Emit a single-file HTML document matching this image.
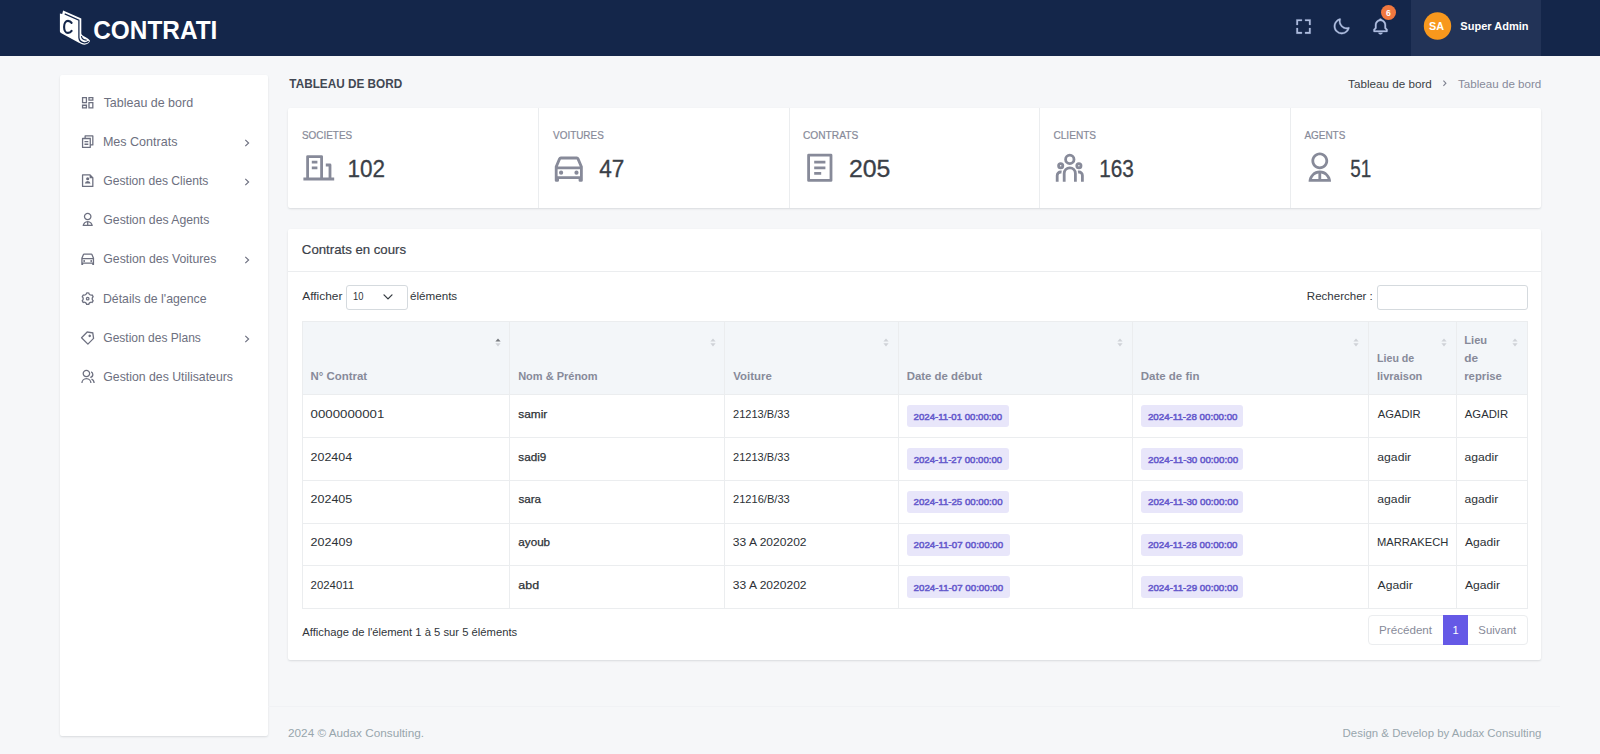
<!DOCTYPE html>
<html lang="fr">
<head>
<meta charset="utf-8">
<title>Contrati - Tableau de bord</title>
<style>
*{box-sizing:border-box;margin:0;padding:0}
html,body{width:1600px;height:754px;overflow:hidden}
body{position:relative;background:#f6f7f9;font-family:"Liberation Sans",sans-serif;font-size:11.7px;color:#212529}
ul,ol{list-style:none}
a{color:inherit;text-decoration:none}
.abs,.tx,svg{position:absolute}
h2,h4,p,li{font:inherit}
text{white-space:pre}
svg{overflow:visible}
#topbar{background:#14264a}
.userbox{background:#223357}
.card{background:#fff;border-radius:2px;box-shadow:0 1px 2px rgba(56,65,74,.15)}
.bell-badge{border-radius:50%;background:#f1783f}
.vline{background:#ebedef;width:1px}
.hline{background:#ebedef;height:1px}
table{position:absolute;border-collapse:separate;border-spacing:0;table-layout:fixed}
th,td{position:relative;border-left:1px solid #ebedef;border-top:1px solid #ebedef;padding:0;font-weight:400;text-align:left}
th:last-child,td:last-child{border-right:1px solid #ebedef}
tbody tr:last-child td{border-bottom:1px solid #ebedef}
thead th{background:#f3f6f9}
.badge{position:absolute;background:#e8e6fa;border-radius:3px}
.field{position:absolute;background:#fff;border:1px solid #d5dade;border-radius:3px}
.pagination{position:absolute;border:1px solid #ebedef;border-radius:4px;background:#fff}
.pagination .on{position:absolute;background:#6559e6}
</style>
</head>
<body>
<header id="topbar" class="abs" style="left:0px;top:0px;width:1600px;height:56px;">
<a class="logo" href="#"><svg style="left:56px;top:8px" width="38" height="40" viewBox="56 8 38 40"><path fill="#fff" d="M59.9 13.6 62.2 13.9 63.1 10.6 81.3 18.4V33.6C81.6 35.4 83.4 36 85.3 36.9 87.7 38 89.6 39.4 90 41.1 89.4 43 87.2 44.6 84.4 44.7 82.4 44.6 80.6 43.6 78.4 42.4L61.4 33.2C60.3 32.6 59.9 31.9 59.9 30.9Z"/><path fill="none" stroke="#14264a" stroke-width="1.25" d="M64.7 13.9 78.9 20.1V37.6C79.1 40.4 81 42.3 84.2 42.8 86.3 42.9 87.9 42.2 88.6 41.2"/><path fill="none" stroke="#14264a" stroke-width="1.1" d="M81.4 36.2C81.8 38.6 83.8 40.2 86.6 40.1"/><path fill="none" stroke="#14264a" stroke-width="2.1" stroke-linecap="round" d="M71.6 22.9A4.3 4.3 0 0 0 68 20.9C65.7 20.9 64.1 23.4 64.1 26.9S65.7 32.9 68 32.9A4.3 4.3 0 0 0 71.6 30.9"/></svg>
<svg id="logo" class="tx" style="left:91px;top:11px" width="128" height="37"><text x="2.20" y="28" font-size="26.3" font-weight="700" fill="#fff" textLength="124.20" lengthAdjust="spacingAndGlyphs">CONTRATI</text></svg></a>
<svg style="left:1294.00px;top:16.65px" width="19.0" height="19.0" viewBox="0 0 24 24"><path fill="#afbee0" stroke="#afbee0" stroke-width="0.35" d="M5 5h5V3H3v7h2zm5 14H5v-5H3v7h7zm11-5h-2v5h-5v2h7zm-2-4h2V3h-7v2h5z"/></svg><svg style="left:1332.30px;top:16.70px" width="19.0" height="19.0" viewBox="0 0 24 24"><path fill="#afbee0" stroke="#afbee0" stroke-width="0.35" d="M20.742 13.045a8.088 8.088 0 0 1-2.077.271c-2.135 0-4.14-.83-5.646-2.336a8.025 8.025 0 0 1-2.064-7.723A1 1 0 0 0 9.73 2.034a10.014 10.014 0 0 0-4.489 2.582c-3.898 3.898-3.898 10.243 0 14.143a9.937 9.937 0 0 0 7.072 2.93 9.93 9.93 0 0 0 7.07-2.929 10.007 10.007 0 0 0 2.583-4.491 1.001 1.001 0 0 0-1.224-1.224zm-2.772 4.301a7.947 7.947 0 0 1-5.656 2.343 7.953 7.953 0 0 1-5.658-2.344c-3.118-3.119-3.118-8.195 0-11.314a7.923 7.923 0 0 1 2.06-1.483 10.027 10.027 0 0 0 2.89 7.848 9.972 9.972 0 0 0 7.848 2.891 8.036 8.036 0 0 1-1.484 2.059z"/></svg><svg style="left:1370.55px;top:16.85px" width="19.0" height="19.0" viewBox="0 0 24 24"><path fill="#afbee0" stroke="#afbee0" stroke-width="0.35" d="M19 13.586V10c0-3.217-2.185-5.927-5.145-6.742C13.562 2.52 12.846 2 12 2s-1.562.52-1.855 1.258C7.185 4.074 5 6.783 5 10v3.586l-1.707 1.707A.996.996 0 0 0 3 16v2a1 1 0 0 0 1 1h16a1 1 0 0 0 1-1v-2a.996.996 0 0 0-.293-.707L19 13.586zM19 17H5v-.586l1.707-1.707A.996.996 0 0 0 7 14v-4c0-2.757 2.243-5 5-5s5 2.243 5 5v4c0 .266.105.52.293.707L19 16.414V17zm-7 5a2.98 2.98 0 0 0 2.818-2H9.182A2.98 2.98 0 0 0 12 22z"/></svg><span class="abs bell-badge" style="left:1381px;top:5px;width:15.4px;height:15.4px;"></span><svg id="bellnum" class="tx" style="left:1383px;top:6px" width="11" height="13"><text x="3.10" y="10" font-size="8.6" font-weight="700" fill="#fff">6</text></svg><div class="abs userbox" style="left:1411px;top:0px;width:130px;height:56px;"><svg class="avatar" style="left:0;top:0" width="130" height="56" viewBox="1411 0 130 56"><circle cx="1437.5" cy="26.0" r="13.7" fill="#f8981d"/></svg><svg id="sa" class="tx" style="left:15px;top:18px" width="22" height="16"><text x="3.00" y="12" font-size="10.8" font-weight="700" fill="#fff">SA</text></svg><svg id="uname" class="tx" style="left:46px;top:18px" width="74" height="16"><text x="3.38" y="12" font-size="10.9" font-weight="700" fill="#fff" textLength="68.10" lengthAdjust="spacingAndGlyphs">Super Admin</text></svg></div>
</header>
<nav id="sidebar" class="abs card" style="left:60px;top:75px;width:208px;height:661px;">
<ul>
<li><a href="#"><svg style="left:19.8px;top:19.70px" width="15.4" height="15.4" viewBox="0 0 24 24"><path fill="#6d7080" d="M13 21V11h8v10h-8zM3 13V3h8v10H3zm6-2V5H5v6h4zM3 21v-6h8v6H3zm2-2h4v-2H5v2zm10 0h4v-6h-4v6zM13 3h8v6h-8V3zm2 2v2h4V5h-4z"/></svg><svg id="m0" class="tx" style="left:40px;top:18px" width="95" height="18"><text x="3.65" y="14" font-size="12.4" fill="#6d7080" textLength="89.44" lengthAdjust="spacingAndGlyphs">Tableau de bord</text></svg></a></li>
<li><a href="#"><svg style="left:19.8px;top:58.86px" width="15.4" height="15.4" viewBox="0 0 24 24"><path fill="#6d7080" d="M7 6V3a1 1 0 0 1 1-1h12a1 1 0 0 1 1 1v14a1 1 0 0 1-1 1h-3v3c0 .552-.45 1-1.007 1H4.007A1.001 1.001 0 0 1 3 21l.003-14c0-.552.45-1 1.007-1H7zM5.003 8L5 20h10V8H5.003zM9 6h8v10h2V4H9v2zm-2 5h6v2H7v-2zm0 4h6v2H7v-2z"/></svg><svg id="m1" class="tx" style="left:40px;top:57px" width="80" height="18"><text x="2.90" y="14" font-size="12.4" fill="#6d7080" textLength="74.55" lengthAdjust="spacingAndGlyphs">Mes Contrats</text></svg><svg style="left:182.8px;top:63.76px" width="8" height="8" viewBox="0 0 8 8" fill="none" stroke="#6d7080" stroke-width="1.15"><path d="M2.3 0.9 5.6 4 2.3 7.1"/></svg></a></li>
<li><a href="#"><svg style="left:19.8px;top:98.02px" width="15.4" height="15.4" viewBox="0 0 24 24"><path fill="#6d7080" d="M15 4H5v16h14V8h-4V4zM3 2.992C3 2.444 3.447 2 3.999 2H16l5 5v13.993A1 1 0 0 1 20.007 22H3.993A1 1 0 0 1 3 21.008V2.992zM12 11.5a2.5 2.5 0 1 1 0-5 2.5 2.5 0 0 1 0 5zm-4.473 5a4.5 4.5 0 0 1 8.946 0H7.527z"/></svg><svg id="m2" class="tx" style="left:40px;top:96px" width="111" height="18"><text x="3.30" y="14" font-size="12.4" fill="#6d7080" textLength="105.09" lengthAdjust="spacingAndGlyphs">Gestion des Clients</text></svg><svg style="left:182.8px;top:102.92px" width="8" height="8" viewBox="0 0 8 8" fill="none" stroke="#6d7080" stroke-width="1.15"><path d="M2.3 0.9 5.6 4 2.3 7.1"/></svg></a></li>
<li><a href="#"><svg style="left:19.8px;top:137.18px" width="15.4" height="15.4" viewBox="0 0 24 24"><path fill="#6d7080" d="M4 22a8 8 0 1 1 16 0H4zm9-5.917V20h4.659A6.009 6.009 0 0 0 13 16.083zM11 20v-3.917A6.009 6.009 0 0 0 6.341 20H11zm1-7c-3.315 0-6-2.685-6-6s2.685-6 6-6 6 2.685 6 6-2.685 6-6 6zm0-2c2.21 0 4-1.79 4-4s-1.79-4-4-4-4 1.79-4 4 1.79 4 4 4z"/></svg><svg id="m3" class="tx" style="left:40px;top:135px" width="112" height="18"><text x="3.33" y="14" font-size="12.4" fill="#6d7080" textLength="106.06" lengthAdjust="spacingAndGlyphs">Gestion des Agents</text></svg></a></li>
<li><a href="#"><svg style="left:19.8px;top:176.34px" width="15.4" height="15.4" viewBox="0 0 24 24"><path fill="#6d7080" d="M19 20H5v1a1 1 0 0 1-1 1H3a1 1 0 0 1-1-1V11l2.48-5.788A2 2 0 0 1 6.32 4H17.68a2 2 0 0 1 1.838 1.212L22 11v10a1 1 0 0 1-1 1h-1a1 1 0 0 1-1-1v-1zm1-7H4v5h16v-5zM4.176 11h15.648l-2.143-5H6.32l-2.143 5zM6.5 17a1.5 1.5 0 1 1 0-3 1.5 1.5 0 0 1 0 3zm11 0a1.5 1.5 0 1 1 0-3 1.5 1.5 0 0 1 0 3z"/></svg><svg id="m4" class="tx" style="left:40px;top:174px" width="119" height="18"><text x="3.30" y="14" font-size="12.4" fill="#6d7080" textLength="113.01" lengthAdjust="spacingAndGlyphs">Gestion des Voitures</text></svg><svg style="left:182.8px;top:181.24px" width="8" height="8" viewBox="0 0 8 8" fill="none" stroke="#6d7080" stroke-width="1.15"><path d="M2.3 0.9 5.6 4 2.3 7.1"/></svg></a></li>
<li><a href="#"><svg style="left:19.8px;top:215.50px" width="15.4" height="15.4" viewBox="0 0 24 24"><path fill="#6d7080" d="M3.34 17a10.018 10.018 0 0 1-.978-2.326 3 3 0 0 0 .002-5.347A9.99 9.99 0 0 1 4.865 4.99a3 3 0 0 0 4.631-2.674 9.99 9.99 0 0 1 5.007.002 3 3 0 0 0 4.632 2.672c.579.59 1.093 1.261 1.525 2.01.433.749.757 1.53.978 2.326a3 3 0 0 0-.002 5.347 9.99 9.99 0 0 1-2.501 4.337 3 3 0 0 0-4.631 2.674 9.99 9.99 0 0 1-5.007-.002 3 3 0 0 0-4.632-2.672A10.018 10.018 0 0 1 3.34 17zm5.66.196a4.993 4.993 0 0 1 2.25 2.77c.499.047 1 .048 1.499.001A4.993 4.993 0 0 1 15 17.197a4.993 4.993 0 0 1 3.525-.565c.29-.408.54-.843.748-1.298A4.993 4.993 0 0 1 18 12c0-1.26.47-2.437 1.273-3.334a8.126 8.126 0 0 0-.75-1.298A4.993 4.993 0 0 1 15 6.804a4.993 4.993 0 0 1-2.25-2.77c-.499-.047-1-.048-1.499-.001A4.993 4.993 0 0 1 9 6.803a4.993 4.993 0 0 1-3.525.565 7.99 7.99 0 0 0-.748 1.298A4.993 4.993 0 0 1 6 12c0 1.26-.47 2.437-1.273 3.334a8.126 8.126 0 0 0 .75 1.298A4.993 4.993 0 0 1 9 17.196zM12 15a3 3 0 1 1 0-6 3 3 0 0 1 0 6zm0-2a1 1 0 1 0 0-2 1 1 0 0 0 0 2z"/></svg><svg id="m5" class="tx" style="left:40px;top:214px" width="109" height="18"><text x="2.94" y="14" font-size="12.4" fill="#6d7080" textLength="103.54" lengthAdjust="spacingAndGlyphs">Détails de l'agence</text></svg></a></li>
<li><a href="#"><svg style="left:19.8px;top:254.66px" width="15.4" height="15.4" viewBox="0 0 24 24"><path fill="#6d7080" d="M10.9 2.1l9.899 1.415 1.414 9.9-9.192 9.192a1 1 0 0 1-1.414 0l-9.9-9.9a1 1 0 0 1 0-1.414L10.9 2.1zm.707 2.122L3.828 12l8.486 8.485 7.778-7.778-1.06-7.425-7.425-1.06zm2.12 6.364a2 2 0 1 1 2.83-2.829 2 2 0 0 1-2.83 2.829z"/></svg><svg id="m6" class="tx" style="left:40px;top:253px" width="103" height="18"><text x="3.29" y="14" font-size="12.4" fill="#6d7080" textLength="97.57" lengthAdjust="spacingAndGlyphs">Gestion des Plans</text></svg><svg style="left:182.8px;top:259.56px" width="8" height="8" viewBox="0 0 8 8" fill="none" stroke="#6d7080" stroke-width="1.15"><path d="M2.3 0.9 5.6 4 2.3 7.1"/></svg></a></li>
<li><a href="#"><svg style="left:19.8px;top:293.82px" width="15.4" height="15.4" viewBox="0 0 24 24"><path fill="#6d7080" d="M2 22a8 8 0 1 1 16 0h-2a6 6 0 1 0-12 0H2zm8-9c-3.315 0-6-2.685-6-6s2.685-6 6-6 6 2.685 6 6-2.685 6-6 6zm0-2c2.21 0 4-1.79 4-4s-1.79-4-4-4-4 1.79-4 4 1.79 4 4 4zm8.284 3.703A8.002 8.002 0 0 1 23 22h-2a6.001 6.001 0 0 0-3.537-5.473l.82-1.824zm-.688-11.29A5.5 5.5 0 0 1 21 8.5a5.499 5.499 0 0 1-5 5.478v-2.013a3.5 3.5 0 0 0 1.041-6.609l.555-1.943z"/></svg><svg id="m7" class="tx" style="left:40px;top:292px" width="135" height="18"><text x="3.26" y="14" font-size="12.4" fill="#6d7080" textLength="129.70" lengthAdjust="spacingAndGlyphs">Gestion des Utilisateurs</text></svg></a></li>
</ul>
</nav>
<main>
<div class="page-title"><h4><svg id="ptitle" class="tx" style="left:286px;top:75px" width="119" height="18"><text x="3.33" y="13" font-size="12.2" font-weight="700" fill="#424853" textLength="112.83" lengthAdjust="spacingAndGlyphs">TABLEAU DE BORD</text></svg></h4><ol class="breadcrumb"><li><svg id="bc1" class="tx" style="left:1345px;top:76px" width="89" height="16"><text x="3.13" y="12" font-size="11.1" fill="#3a3f45" textLength="83.68" lengthAdjust="spacingAndGlyphs">Tableau de bord</text></svg></li><li aria-hidden="true"><svg style="left:1441px;top:79px" width="8" height="8" viewBox="0 0 8 8" fill="none" stroke="#7d8090" stroke-width="1.1"><path d="M2.4 1.6 4.9 4.2 2.4 6.8"/></svg></li><li><svg id="bc2" class="tx" style="left:1455px;top:76px" width="89" height="16"><text x="3.05" y="12" font-size="11.1" fill="#878a99" textLength="83.28" lengthAdjust="spacingAndGlyphs">Tableau de bord</text></svg></li></ol></div>
<section class="abs card stats" style="left:288px;top:108px;width:1253px;height:100px;">
<div class="stat"><p><svg id="sl0" class="tx" style="left:11px;top:20px" width="56" height="15"><text x="2.99" y="11" font-size="10.1" fill="#878a99" stroke="#878a99" stroke-width="0.2" textLength="50.16" lengthAdjust="spacingAndGlyphs">SOCIETES</text></svg></p><svg style="left:13.8px;top:43.4px" width="33.6" height="33.6" viewBox="0 0 24 24"><path fill="#878a99" d="M21 19h2v2H1v-2h2V4a1 1 0 0 1 1-1h10a1 1 0 0 1 1 1v15h4v-8h-2V9h3a1 1 0 0 1 1 1v9zM5 5v14h8V5H5zm2 6h4v2H7v-2zm0-4h4v2H7V7z"/></svg><h2><svg id="sn0" class="tx" style="left:58px;top:44px" width="42" height="33"><text x="1.56" y="25" font-size="23.0" fill="#3a4047" stroke="#3a4047" stroke-width="0.3" textLength="37.52" lengthAdjust="spacingAndGlyphs">102</text></svg></h2></div>
<div class="stat"><span class="abs vline" style="left:250px;top:0;height:100px"></span><p><svg id="sl1" class="tx" style="left:262px;top:20px" width="57" height="15"><text x="3.07" y="11" font-size="10.1" fill="#878a99" stroke="#878a99" stroke-width="0.2" textLength="50.72" lengthAdjust="spacingAndGlyphs">VOITURES</text></svg></p><svg style="left:264.2px;top:43.4px" width="33.6" height="33.6" viewBox="0 0 24 24"><path fill="#878a99" d="M19 20H5v1a1 1 0 0 1-1 1H3a1 1 0 0 1-1-1V11l2.48-5.788A2 2 0 0 1 6.32 4H17.68a2 2 0 0 1 1.838 1.212L22 11v10a1 1 0 0 1-1 1h-1a1 1 0 0 1-1-1v-1zm1-7H4v5h16v-5zM4.176 11h15.648l-2.143-5H6.32l-2.143 5zM6.5 17a1.5 1.5 0 1 1 0-3 1.5 1.5 0 0 1 0 3zm11 0a1.5 1.5 0 1 1 0-3 1.5 1.5 0 0 1 0 3z"/></svg><h2><svg id="sn1" class="tx" style="left:308px;top:44px" width="30" height="33"><text x="3.25" y="25" font-size="23.0" fill="#3a4047" stroke="#3a4047" stroke-width="0.3" textLength="25.11" lengthAdjust="spacingAndGlyphs">47</text></svg></h2></div>
<div class="stat"><span class="abs vline" style="left:501px;top:0;height:100px"></span><p><svg id="sl2" class="tx" style="left:512px;top:20px" width="61" height="15"><text x="2.94" y="11" font-size="10.1" fill="#878a99" stroke="#878a99" stroke-width="0.2" textLength="55.27" lengthAdjust="spacingAndGlyphs">CONTRATS</text></svg></p><svg style="left:514.6px;top:43.4px" width="33.6" height="33.6" viewBox="0 0 24 24"><path fill="#878a99" d="M20 22H4a1 1 0 0 1-1-1V3a1 1 0 0 1 1-1h16a1 1 0 0 1 1 1v18a1 1 0 0 1-1 1zm-1-2V4H5v16h14zM8 7h8v2H8V7zm0 4h8v2H8v-2zm0 4h5v2H8v-2z"/></svg><h2><svg id="sn2" class="tx" style="left:558px;top:44px" width="46" height="33"><text x="2.94" y="25" font-size="23.0" fill="#3a4047" stroke="#3a4047" stroke-width="0.3" textLength="41.43" lengthAdjust="spacingAndGlyphs">205</text></svg></h2></div>
<div class="stat"><span class="abs vline" style="left:751px;top:0;height:100px"></span><p><svg id="sl3" class="tx" style="left:762px;top:20px" width="49" height="15"><text x="3.45" y="11" font-size="10.1" fill="#878a99" stroke="#878a99" stroke-width="0.2" textLength="42.66" lengthAdjust="spacingAndGlyphs">CLIENTS</text></svg></p><svg style="left:765.0px;top:43.4px" width="33.6" height="33.6" viewBox="0 0 24 24"><path fill="#878a99" d="M12 11a5 5 0 0 1 5 5v6h-2v-6a3 3 0 0 0-2.824-2.995L12 13a3 3 0 0 0-2.995 2.824L9 16v6H7v-6a5 5 0 0 1 5-5zm-6.5 3c.279 0 .55.033.81.094a5.947 5.947 0 0 0-.301 1.575L6 16v.086a1.492 1.492 0 0 0-.356-.08L5.5 16a1.5 1.5 0 0 0-1.493 1.356L4 17.5V22H2v-4.5A3.5 3.5 0 0 1 5.5 14zm13 0a3.5 3.5 0 0 1 3.5 3.5V22h-2v-4.5a1.5 1.5 0 0 0-1.356-1.493L18.5 16c-.175 0-.343.03-.5.085V16c0-.666-.108-1.306-.309-1.904.259-.063.53-.096.809-.096zm-13-6a2.5 2.5 0 1 1 0 5 2.5 2.5 0 0 1 0-5zm13 0a2.5 2.5 0 1 1 0 5 2.5 2.5 0 0 1 0-5zm-13 2a.5.5 0 1 0 0 1 .5.5 0 0 0 0-1zm13 0a.5.5 0 1 0 0 1 .5.5 0 0 0 0-1zM12 2a4 4 0 1 1 0 8 4 4 0 0 1 0-8zm0 2a2 2 0 1 0 0 4 2 2 0 0 0 0-4z"/></svg><h2><svg id="sn3" class="tx" style="left:809px;top:44px" width="39" height="33"><text x="2.19" y="25" font-size="23.0" fill="#3a4047" stroke="#3a4047" stroke-width="0.3" textLength="34.67" lengthAdjust="spacingAndGlyphs">163</text></svg></h2></div>
<div class="stat"><span class="abs vline" style="left:1002px;top:0;height:100px"></span><p><svg id="sl4" class="tx" style="left:1013px;top:20px" width="47" height="15"><text x="3.38" y="11" font-size="10.1" fill="#878a99" stroke="#878a99" stroke-width="0.2" textLength="40.93" lengthAdjust="spacingAndGlyphs">AGENTS</text></svg></p><svg style="left:1015.4px;top:43.4px" width="33.6" height="33.6" viewBox="0 0 24 24"><path fill="#878a99" d="M4 22a8 8 0 1 1 16 0H4zm9-5.917V20h4.659A6.009 6.009 0 0 0 13 16.083zM11 20v-3.917A6.009 6.009 0 0 0 6.341 20H11zm1-7c-3.315 0-6-2.685-6-6s2.685-6 6-6 6 2.685 6 6-2.685 6-6 6zm0-2c2.21 0 4-1.79 4-4s-1.79-4-4-4-4 1.79-4 4 1.79 4 4 4z"/></svg><h2><svg id="sn4" class="tx" style="left:1059px;top:44px" width="26" height="33"><text x="3.37" y="25" font-size="23.0" fill="#3a4047" stroke="#3a4047" stroke-width="0.3" textLength="21.00" lengthAdjust="spacingAndGlyphs">51</text></svg></h2></div>
</section>
<section class="abs card" style="left:288px;top:229px;width:1253px;height:431px;">
<div class="card-header"><h4><svg id="ctitle" class="tx" style="left:11px;top:11px" width="110" height="19"><text x="2.87" y="14" font-size="12.9" fill="#3a4048" stroke="#3a4048" stroke-width="0.2" textLength="104.20" lengthAdjust="spacingAndGlyphs">Contrats en cours</text></svg></h4><span class="abs hline" style="left:0;top:42px;width:1253px"></span></div>
<div class="dt-length"><label><svg id="aff" class="tx" style="left:11px;top:59px" width="47" height="16"><text x="3.25" y="12" font-size="11.3" fill="#30353a" textLength="40.11" lengthAdjust="spacingAndGlyphs">Afficher</text></svg><span class="field" style="left:58px;top:56px;width:62px;height:24.5px;"><svg id="ten" class="tx" style="left:3px;top:3px" width="16" height="14"><text x="2.99" y="11" font-size="10.0" fill="#30353a" textLength="10.42" lengthAdjust="spacingAndGlyphs">10</text></svg><svg style="left:36px;top:7px" width="10" height="8" viewBox="0 0 10 8" fill="none" stroke="#343a40" stroke-width="1.3" stroke-linecap="round" stroke-linejoin="round"><path d="M1 1.9 5 5.9 9 1.9"/></svg></span><svg id="elem" class="tx" style="left:121px;top:59px" width="51" height="16"><text x="0.99" y="12" font-size="11.3" fill="#30353a" textLength="47.20" lengthAdjust="spacingAndGlyphs">éléments</text></svg></label></div>
<div class="dt-filter"><label><svg id="rech" class="tx" style="left:1016px;top:59px" width="71" height="16"><text x="2.85" y="12" font-size="11.3" fill="#30353a" textLength="65.94" lengthAdjust="spacingAndGlyphs">Rechercher :</text></svg><span class="field" style="left:1089px;top:56px;width:150.5px;height:24.5px;"></span></label></div>
<table style="left:14px;top:92px;width:1226px">
<colgroup><col style="width:207px"><col style="width:215px"><col style="width:174px"><col style="width:234px"><col style="width:236px"><col style="width:88px"><col style="width:72px"></colgroup>
<thead>
<tr style="height:73px"><th><svg id="h0_0" class="tx" style="left:5px;top:45px" width="63" height="17"><text x="2.41" y="13" font-size="11.6" font-weight="700" fill="#878a99" textLength="56.78" lengthAdjust="spacingAndGlyphs">N° Contrat</text></svg><svg style="left:192.2px;top:16px" width="6" height="9" viewBox="0 0 6 9"><path d="M3 0.4 5.6 3.6H0.4z" fill="#76787d"/><path d="M3 8.4 5.6 5.2H0.4z" fill="#cfd2d7"/></svg></th><th><svg id="h1_0" class="tx" style="left:5px;top:45px" width="85" height="17"><text x="3.16" y="13" font-size="11.6" font-weight="700" fill="#878a99" textLength="79.47" lengthAdjust="spacingAndGlyphs">Nom &amp; Prénom</text></svg><svg style="left:199.6px;top:16px" width="6" height="9" viewBox="0 0 6 9"><path d="M3 0.4 5.6 3.6H0.4z" fill="#cfd2d7"/><path d="M3 8.4 5.6 5.2H0.4z" fill="#cfd2d7"/></svg></th><th><svg id="h2_0" class="tx" style="left:5px;top:45px" width="44" height="17"><text x="3.37" y="13" font-size="11.6" font-weight="700" fill="#878a99" textLength="38.46" lengthAdjust="spacingAndGlyphs">Voiture</text></svg><svg style="left:158.4px;top:16px" width="6" height="9" viewBox="0 0 6 9"><path d="M3 0.4 5.6 3.6H0.4z" fill="#cfd2d7"/><path d="M3 8.4 5.6 5.2H0.4z" fill="#cfd2d7"/></svg></th><th><svg id="h3_0" class="tx" style="left:5px;top:45px" width="81" height="17"><text x="2.71" y="13" font-size="11.6" font-weight="700" fill="#878a99" textLength="75.35" lengthAdjust="spacingAndGlyphs">Date de début</text></svg><svg style="left:218.4px;top:16px" width="6" height="9" viewBox="0 0 6 9"><path d="M3 0.4 5.6 3.6H0.4z" fill="#cfd2d7"/><path d="M3 8.4 5.6 5.2H0.4z" fill="#cfd2d7"/></svg></th><th><svg id="h4_0" class="tx" style="left:5px;top:45px" width="64" height="17"><text x="2.75" y="13" font-size="11.6" font-weight="700" fill="#878a99" textLength="58.70" lengthAdjust="spacingAndGlyphs">Date de fin</text></svg><svg style="left:220.2px;top:16px" width="6" height="9" viewBox="0 0 6 9"><path d="M3 0.4 5.6 3.6H0.4z" fill="#cfd2d7"/><path d="M3 8.4 5.6 5.2H0.4z" fill="#cfd2d7"/></svg></th><th><svg id="h5_0" class="tx" style="left:5px;top:27px" width="43" height="17"><text x="3.01" y="13" font-size="11.6" font-weight="700" fill="#878a99" textLength="37.28" lengthAdjust="spacingAndGlyphs">Lieu de</text></svg><svg id="h5_1" class="tx" style="left:5px;top:45px" width="51" height="17"><text x="3.03" y="13" font-size="11.6" font-weight="700" fill="#878a99" textLength="45.33" lengthAdjust="spacingAndGlyphs">livraison</text></svg><svg style="left:71.6px;top:16px" width="6" height="9" viewBox="0 0 6 9"><path d="M3 0.4 5.6 3.6H0.4z" fill="#cfd2d7"/><path d="M3 8.4 5.6 5.2H0.4z" fill="#cfd2d7"/></svg></th><th><svg id="h6_0" class="tx" style="left:4px;top:9px" width="28" height="17"><text x="3.31" y="13" font-size="11.6" font-weight="700" fill="#878a99" textLength="22.86" lengthAdjust="spacingAndGlyphs">Lieu</text></svg><svg id="h6_1" class="tx" style="left:4px;top:27px" width="20" height="17"><text x="3.38" y="13" font-size="11.6" font-weight="700" fill="#878a99" textLength="13.85" lengthAdjust="spacingAndGlyphs">de</text></svg><svg id="h6_2" class="tx" style="left:4px;top:45px" width="43" height="17"><text x="3.21" y="13" font-size="11.6" font-weight="700" fill="#878a99" textLength="37.71" lengthAdjust="spacingAndGlyphs">reprise</text></svg><svg style="left:55.0px;top:16px" width="6" height="9" viewBox="0 0 6 9"><path d="M3 0.4 5.6 3.6H0.4z" fill="#cfd2d7"/><path d="M3 8.4 5.6 5.2H0.4z" fill="#cfd2d7"/></svg></th></tr>
</thead>
<tbody>
<tr style="height:43px"><td><svg id="c0_0" class="tx" style="left:5px;top:11px" width="79" height="16"><text x="2.63" y="12" font-size="11.2" fill="#2c3136" textLength="73.70" lengthAdjust="spacingAndGlyphs">0000000001</text></svg></td><td><svg id="c0_1" class="tx" style="left:5px;top:11px" width="35" height="16"><text x="3.36" y="12" font-size="11.2" fill="#2c3136" stroke="#2c3136" stroke-width="0.25" textLength="28.92" lengthAdjust="spacingAndGlyphs">samir</text></svg></td><td><svg id="c0_2" class="tx" style="left:5px;top:11px" width="62" height="16"><text x="3.05" y="12" font-size="11.2" fill="#2c3136" textLength="56.52" lengthAdjust="spacingAndGlyphs">21213/B/33</text></svg></td><td><span class="badge" style="left:8px;top:10px;width:102px;height:22px;"><svg id="c0_3" class="tx" style="left:3px;top:4px" width="95" height="14"><text x="3.63" y="11" font-size="9.6" fill="#6559cc" stroke="#6559cc" stroke-width="0.5" textLength="88.46" lengthAdjust="spacingAndGlyphs">2024-11-01 00:00:00</text></svg></span></td><td><span class="badge" style="left:8px;top:10px;width:102px;height:22px;"><svg id="c0_4" class="tx" style="left:4px;top:4px" width="96" height="14"><text x="2.92" y="11" font-size="9.6" fill="#6559cc" stroke="#6559cc" stroke-width="0.5" textLength="89.55" lengthAdjust="spacingAndGlyphs">2024-11-28 00:00:00</text></svg></span></td><td><svg id="c0_5" class="tx" style="left:5px;top:11px" width="49" height="16"><text x="3.75" y="12" font-size="11.2" fill="#2c3136" textLength="42.94" lengthAdjust="spacingAndGlyphs">AGADIR</text></svg></td><td><svg id="c0_6" class="tx" style="left:4px;top:11px" width="49" height="16"><text x="3.84" y="12" font-size="11.2" fill="#2c3136" textLength="43.35" lengthAdjust="spacingAndGlyphs">AGADIR</text></svg></td></tr>
<tr style="height:43px"><td><svg id="c1_0" class="tx" style="left:5px;top:11px" width="47" height="16"><text x="2.56" y="12" font-size="11.2" fill="#2c3136" textLength="41.54" lengthAdjust="spacingAndGlyphs">202404</text></svg></td><td><svg id="c1_1" class="tx" style="left:5px;top:11px" width="34" height="16"><text x="3.37" y="12" font-size="11.2" fill="#2c3136" stroke="#2c3136" stroke-width="0.25" textLength="27.85" lengthAdjust="spacingAndGlyphs">sadi9</text></svg></td><td><svg id="c1_2" class="tx" style="left:5px;top:11px" width="62" height="16"><text x="3.05" y="12" font-size="11.2" fill="#2c3136" textLength="56.52" lengthAdjust="spacingAndGlyphs">21213/B/33</text></svg></td><td><span class="badge" style="left:8px;top:10px;width:102px;height:22px;"><svg id="c1_3" class="tx" style="left:3px;top:4px" width="95" height="14"><text x="3.63" y="11" font-size="9.6" fill="#6559cc" stroke="#6559cc" stroke-width="0.5" textLength="88.45" lengthAdjust="spacingAndGlyphs">2024-11-27 00:00:00</text></svg></span></td><td><span class="badge" style="left:8px;top:10px;width:102px;height:22px;"><svg id="c1_4" class="tx" style="left:4px;top:4px" width="96" height="14"><text x="2.97" y="11" font-size="9.6" fill="#6559cc" stroke="#6559cc" stroke-width="0.5" textLength="90.10" lengthAdjust="spacingAndGlyphs">2024-11-30 00:00:00</text></svg></span></td><td><svg id="c1_5" class="tx" style="left:5px;top:11px" width="40" height="16"><text x="3.34" y="12" font-size="11.2" fill="#2c3136" textLength="33.85" lengthAdjust="spacingAndGlyphs">agadir</text></svg></td><td><svg id="c1_6" class="tx" style="left:4px;top:11px" width="40" height="16"><text x="3.56" y="12" font-size="11.2" fill="#2c3136" textLength="33.82" lengthAdjust="spacingAndGlyphs">agadir</text></svg></td></tr>
<tr style="height:43px"><td><svg id="c2_0" class="tx" style="left:5px;top:10px" width="47" height="16"><text x="2.54" y="12" font-size="11.2" fill="#2c3136" textLength="41.71" lengthAdjust="spacingAndGlyphs">202405</text></svg></td><td><svg id="c2_1" class="tx" style="left:5px;top:10px" width="29" height="16"><text x="3.48" y="12" font-size="11.2" fill="#2c3136" stroke="#2c3136" stroke-width="0.25" textLength="22.62" lengthAdjust="spacingAndGlyphs">sara</text></svg></td><td><svg id="c2_2" class="tx" style="left:5px;top:10px" width="62" height="16"><text x="3.02" y="12" font-size="11.2" fill="#2c3136" textLength="56.72" lengthAdjust="spacingAndGlyphs">21216/B/33</text></svg></td><td><span class="badge" style="left:8px;top:10px;width:102px;height:22px;"><svg id="c2_3" class="tx" style="left:3px;top:3px" width="95" height="14"><text x="3.54" y="11" font-size="9.6" fill="#6559cc" stroke="#6559cc" stroke-width="0.5" textLength="89.00" lengthAdjust="spacingAndGlyphs">2024-11-25 00:00:00</text></svg></span></td><td><span class="badge" style="left:8px;top:10px;width:102px;height:22px;"><svg id="c2_4" class="tx" style="left:4px;top:3px" width="96" height="14"><text x="2.97" y="11" font-size="9.6" fill="#6559cc" stroke="#6559cc" stroke-width="0.5" textLength="90.10" lengthAdjust="spacingAndGlyphs">2024-11-30 00:00:00</text></svg></span></td><td><svg id="c2_5" class="tx" style="left:5px;top:10px" width="40" height="16"><text x="3.34" y="12" font-size="11.2" fill="#2c3136" textLength="33.85" lengthAdjust="spacingAndGlyphs">agadir</text></svg></td><td><svg id="c2_6" class="tx" style="left:4px;top:10px" width="40" height="16"><text x="3.56" y="12" font-size="11.2" fill="#2c3136" textLength="33.82" lengthAdjust="spacingAndGlyphs">agadir</text></svg></td></tr>
<tr style="height:42px"><td><svg id="c3_0" class="tx" style="left:5px;top:10px" width="47" height="16"><text x="2.55" y="12" font-size="11.2" fill="#2c3136" textLength="41.82" lengthAdjust="spacingAndGlyphs">202409</text></svg></td><td><svg id="c3_1" class="tx" style="left:5px;top:10px" width="38" height="16"><text x="3.37" y="12" font-size="11.2" fill="#2c3136" stroke="#2c3136" stroke-width="0.25" textLength="31.74" lengthAdjust="spacingAndGlyphs">ayoub</text></svg></td><td><svg id="c3_2" class="tx" style="left:5px;top:10px" width="79" height="16"><text x="2.87" y="12" font-size="11.2" fill="#2c3136" textLength="73.72" lengthAdjust="spacingAndGlyphs">33 A 2020202</text></svg></td><td><span class="badge" style="left:8px;top:10px;width:103px;height:22px;"><svg id="c3_3" class="tx" style="left:3px;top:3px" width="96" height="14"><text x="3.63" y="11" font-size="9.6" fill="#6559cc" stroke="#6559cc" stroke-width="0.5" textLength="89.55" lengthAdjust="spacingAndGlyphs">2024-11-07 00:00:00</text></svg></span></td><td><span class="badge" style="left:8px;top:10px;width:102px;height:22px;"><svg id="c3_4" class="tx" style="left:4px;top:3px" width="96" height="14"><text x="2.92" y="11" font-size="9.6" fill="#6559cc" stroke="#6559cc" stroke-width="0.5" textLength="89.55" lengthAdjust="spacingAndGlyphs">2024-11-28 00:00:00</text></svg></span></td><td><svg id="c3_5" class="tx" style="left:5px;top:10px" width="76" height="16"><text x="3.01" y="12" font-size="11.2" fill="#2c3136" textLength="71.34" lengthAdjust="spacingAndGlyphs">MARRAKECH</text></svg></td><td><svg id="c3_6" class="tx" style="left:4px;top:10px" width="41" height="16"><text x="3.92" y="12" font-size="11.2" fill="#2c3136" textLength="35.02" lengthAdjust="spacingAndGlyphs">Agadir</text></svg></td></tr>
<tr style="height:44px"><td><svg id="c4_0" class="tx" style="left:5px;top:11px" width="49" height="16"><text x="2.61" y="12" font-size="11.2" fill="#2c3136" textLength="43.52" lengthAdjust="spacingAndGlyphs">2024011</text></svg></td><td><svg id="c4_1" class="tx" style="left:5px;top:11px" width="26" height="16"><text x="3.38" y="12" font-size="11.2" fill="#2c3136" stroke="#2c3136" stroke-width="0.25" textLength="20.71" lengthAdjust="spacingAndGlyphs">abd</text></svg></td><td><svg id="c4_2" class="tx" style="left:5px;top:11px" width="79" height="16"><text x="2.87" y="12" font-size="11.2" fill="#2c3136" textLength="73.72" lengthAdjust="spacingAndGlyphs">33 A 2020202</text></svg></td><td><span class="badge" style="left:8px;top:10px;width:103px;height:22px;"><svg id="c4_3" class="tx" style="left:3px;top:4px" width="96" height="14"><text x="3.63" y="11" font-size="9.6" fill="#6559cc" stroke="#6559cc" stroke-width="0.5" textLength="89.55" lengthAdjust="spacingAndGlyphs">2024-11-07 00:00:00</text></svg></span></td><td><span class="badge" style="left:8px;top:10px;width:102px;height:22px;"><svg id="c4_4" class="tx" style="left:4px;top:4px" width="96" height="14"><text x="2.99" y="11" font-size="9.6" fill="#6559cc" stroke="#6559cc" stroke-width="0.5" textLength="89.84" lengthAdjust="spacingAndGlyphs">2024-11-29 00:00:00</text></svg></span></td><td><svg id="c4_5" class="tx" style="left:5px;top:11px" width="41" height="16"><text x="3.64" y="12" font-size="11.2" fill="#2c3136" textLength="35.05" lengthAdjust="spacingAndGlyphs">Agadir</text></svg></td><td><svg id="c4_6" class="tx" style="left:4px;top:11px" width="41" height="16"><text x="3.92" y="12" font-size="11.2" fill="#2c3136" textLength="35.02" lengthAdjust="spacingAndGlyphs">Agadir</text></svg></td></tr>
</tbody>
</table>
<div class="dt-info"><svg id="info" class="tx" style="left:11px;top:395px" width="221" height="16"><text x="3.25" y="12" font-size="11.3" fill="#30353a" textLength="214.91" lengthAdjust="spacingAndGlyphs">Affichage de l'élement 1 à 5 sur 5 éléments</text></svg></div>
<ul class="pagination" style="left:1080px;top:386px;width:159.5px;height:30px;"><li><svg id="prev" class="tx" style="left:7px;top:6px" width="59" height="16"><text x="3.10" y="12" font-size="11.1" fill="#878a99" textLength="52.96" lengthAdjust="spacingAndGlyphs">Précédent</text></svg></li><li class="on" style="left:73.5px;top:-1px;width:25.5px;height:30px;"><svg id="pg1" class="tx" style="left:6.5px;top:7px" width="13" height="16"><text x="3.60" y="12" font-size="11.1" fill="#fff">1</text></svg></li><li><svg id="next" class="tx" style="left:106px;top:6px" width="44" height="16"><text x="3.37" y="12" font-size="11.1" fill="#878a99" textLength="37.84" lengthAdjust="spacingAndGlyphs">Suivant</text></svg></li></ul>
</section>
</main>
<footer><span class="abs" style="left:268px;top:706px;width:1292px;height:1px;background:#f1f2f5"></span><svg id="f1" class="tx" style="left:285px;top:725px" width="141" height="16"><text x="3.07" y="12" font-size="11.2" fill="#98a6ad" textLength="135.90" lengthAdjust="spacingAndGlyphs">2024 © Audax Consulting.</text></svg><svg id="f2" class="tx" style="left:1340px;top:725px" width="204" height="16"><text x="2.61" y="12" font-size="11.2" fill="#98a6ad" textLength="198.73" lengthAdjust="spacingAndGlyphs">Design &amp; Develop by Audax Consulting</text></svg></footer>
</body>
</html>
